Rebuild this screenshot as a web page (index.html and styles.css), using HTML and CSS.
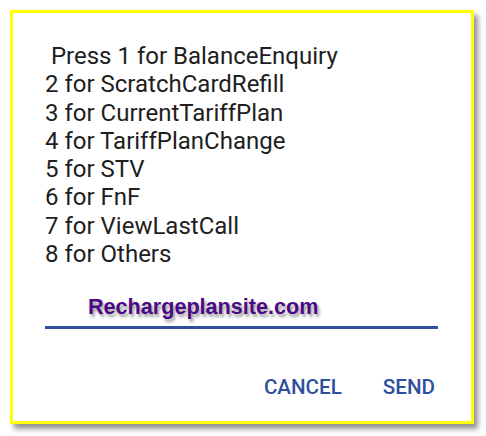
FILE: index.html
```html
<!DOCTYPE html>
<html>
<head>
<meta charset="utf-8">
<link rel="stylesheet" href="styles.css">
</head>
<body>
<div class="dialog">
<div class="message"> Press 1 for BalanceEnquiry
2 for ScratchCardRefill
3 for CurrentTariffPlan
4 for TariffPlanChange
5 for STV
6 for FnF
7 for ViewLastCall
8 for Others</div>
<div class="field"><span class="brand">Rechargeplansite.com</span></div>
<div class="actions">
<span class="btn">CANCEL</span>
<span class="btn">SEND</span>
</div>
</div>
</body>
</html>
```
FILE: styles.css
```css
html, body {
  margin: 0;
  padding: 0;
  background: #ffffff;
}
.dialog {
  margin: 10px;
  width: 464px;
  height: 414px;
  box-sizing: border-box;
  border: 3px solid #ffff00;
  background: #ffffff;
  box-shadow: 4px 5px 5px rgba(60, 60, 60, 0.55);
  padding: 29px 33px 0 32px;
}
.message {
  white-space: pre;
  font-family: Roboto, "Noto Sans", sans-serif;
  font-size: 24px;
  line-height: 28.3px;
  color: #1e1e1e;
}
.field {
  margin-top: 27px;
  padding: 0 0 5px 43px;
  border-bottom: 3px solid #2d4f9e;
  line-height: 24px;
}
.brand {
  font-family: "Liberation Sans", Arial, sans-serif;
  font-weight: bold;
  font-size: 21.6px;
  color: #4b0a85;
  text-shadow: 2px 3px 3px rgba(90, 90, 90, 0.6);
}
.actions {
  margin-top: 48px;
  display: flex;
  justify-content: flex-end;
  gap: 41px;
  padding-right: 3px;
}
.btn {
  font-family: Roboto, sans-serif;
  font-weight: 500;
  font-size: 20.6px;
  line-height: 20px;
  color: #2e4f9e;
}
```
